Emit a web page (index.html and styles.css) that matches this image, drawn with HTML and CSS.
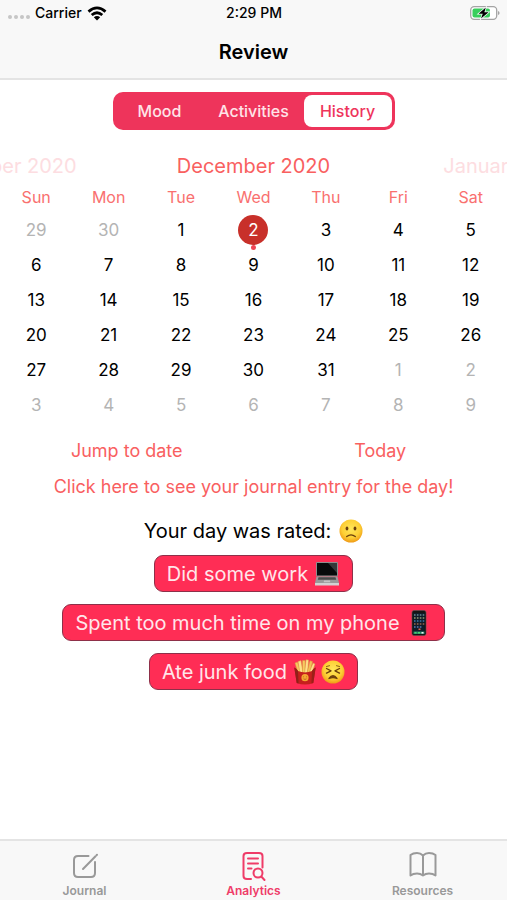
FILE: index.html
```html
<!DOCTYPE html>
<html lang="en">
<head>
    <meta charset="UTF-8" />
    <meta name="viewport" content="width=device-width, initial-scale=1.0" />
    <title>Review</title>
    <link rel="stylesheet" href="styles.css">
</head>
<body>
    <header class="top-bar">
        <div class="status">
            <div class="status-left">
                <span class="signal"><i></i><i></i><i></i><i></i></span>
                <span>Carrier</span>
                <svg class="wifi" viewBox="0 0 20 15" width="20" height="15">
                    <g fill="none" stroke="#000" stroke-width="2.800">
                        <path d="M1.500 5.600Q10-1.800 18.500 5.600" />
                        <path d="M4.700 9Q10 4.400 15.300 9" />
                    </g>
                    <path d="M6.800 11.200Q10 8.600 13.200 11.200L10 14.500z" />
                </svg>
            </div>
            <span>2:29 PM</span>
            <div class="status-right">
                <svg viewBox="0 0 30 14" width="30" height="14">
                    <rect x=".7" y=".7" width="26" height="12.600" rx="3.500" fill="#fff" stroke="#a4a4a4" stroke-width="1.300" />
                    <rect x="2.500" y="2.500" width="17.500" height="9" rx="2" fill="#38cf5c" />
                    <path d="M28 5v4q1.600-.6 1.600-2T28 5z" fill="#a4a4a4" />
                    <path d="M15.800 1.600L8.500 7.800h4.200L11 12.600l7.600-6.400h-4.200z" fill="#000" stroke="#fff" stroke-width="1.400" paint-order="stroke" />
                </svg>
            </div>
        </div>
        <h1>Review</h1>
    </header>

    <main>
        <div class="segments">
            <button type="button">Mood</button>
            <button type="button">Activities</button>
            <button type="button" class="selected">History</button>
        </div>

        <div class="months">
            <span class="faded">November 2020</span>
            <span>December 2020</span>
            <span class="faded">January 2021</span>
        </div>

        <table class="calendar">
            <thead>
                <tr><th>Sun</th><th>Mon</th><th>Tue</th><th>Wed</th><th>Thu</th><th>Fri</th><th>Sat</th></tr>
            </thead>
            <tbody>
                <tr><td class="other">29</td><td class="other">30</td><td>1</td><td><span class="today">2</span></td><td>3</td><td>4</td><td>5</td></tr>
                <tr><td>6</td><td>7</td><td>8</td><td>9</td><td>10</td><td>11</td><td>12</td></tr>
                <tr><td>13</td><td>14</td><td>15</td><td>16</td><td>17</td><td>18</td><td>19</td></tr>
                <tr><td>20</td><td>21</td><td>22</td><td>23</td><td>24</td><td>25</td><td>26</td></tr>
                <tr><td>27</td><td>28</td><td>29</td><td>30</td><td>31</td><td class="other">1</td><td class="other">2</td></tr>
                <tr><td class="other">3</td><td class="other">4</td><td class="other">5</td><td class="other">6</td><td class="other">7</td><td class="other">8</td><td class="other">9</td></tr>
            </tbody>
        </table>

        <div class="jump">
            <button type="button">Jump to date</button>
            <button type="button">Today</button>
        </div>
        <a class="entry" href="#entry">Click here to see your journal entry for the day!</a>

        <p class="rating">
            <span>Your day was rated:</span>
            <svg viewBox="0 0 24 24" width="24" height="24" role="img" aria-label="sad">
                <defs>
                    <radialGradient id="face" cx=".5" cy=".4" r=".6">
                        <stop offset="0" stop-color="#ffe75a" />
                        <stop offset=".65" stop-color="#fdcf35" />
                        <stop offset="1" stop-color="#ef9a16" />
                    </radialGradient>
                </defs>
                <circle cx="12" cy="12" r="11.500" fill="url(#face)" />
                <ellipse cx="8" cy="9.500" rx="1.400" ry="2" fill="#6b3f0c" />
                <ellipse cx="16" cy="9.500" rx="1.400" ry="2" fill="#6b3f0c" />
                <path d="M7.700 17.600q4.300-3.600 8.600 0" fill="none" stroke="#6b3f0c" stroke-width="1.300" stroke-linecap="round" />
            </svg>
        </p>

        <ul class="tags">
            <li>
                <span>Did some work</span>
                <!-- laptop -->
                <svg viewBox="0 0 26 26" width="26" height="26">
                    <rect x="2" y="1" width="22" height="14.500" rx="1" fill="#8d8d8d" />
                    <path d="M3 2h20v12.500H3z" fill="#080a0b" />
                    <path d="M14 2h9v10z" fill="#35393a" />
                    <path d="M2.500 15.500h21L25 22H1z" fill="#9a9a9a" />
                    <path d="M4.500 16.300h17l.7 2.500H3.800z" fill="#4b4b4b" />
                    <path d="M10 19.500h6l.3 1.700H9.700z" fill="#c4c4c4" />
                    <path d="M1 22h24v2.500H1z" fill="#d2d2d2" />
                </svg>
            </li>
            <li>
                <span>Spent too much time on my phone</span>
                <!-- phone -->
                <svg viewBox="0 0 26 26" width="26" height="26">
                    <rect x="6" y=".5" width="14" height="25" rx="2" fill="#151515" stroke="#56504f" stroke-width=".6" />
                    <path d="M7.500 3h11v19.500h-11z" fill="#101c29" />
                    <g fill="none" stroke-width="1.600" stroke-dasharray="1.600 1.300">
                        <path d="M8 5h10.500" stroke="#698a94" />
                        <path d="M8 8h10.500" stroke="#8d9b72" />
                        <path d="M8 11h10.500" stroke="#397ba9" />
                        <path d="M8 14h10.500" stroke="#9b654c" />
                        <path d="M8 17h8" stroke="#547bb4" />
                    </g>
                    <path d="M12.500 18.500h2v1.500h-2z" fill="#df634c" />
                    <path d="M7.500 21.500h11V24h-11z" fill="#26846b" />
                    <path d="M8.500 22h2v1.600h-2zm3.500 0h2v1.600h-2z" fill="#4ed46b" />
                    <path d="M15.500 22h2v1.600h-2z" fill="#eee" />
                </svg>
            </li>
            <li>
                <span>Ate junk food</span>
                <span class="pair">
                    <!-- fries -->
                    <svg viewBox="0 0 24 26" width="24" height="26">
                        <g stroke="#d99b3c" stroke-width=".5">
                            <path d="M2 4l2.500-1L8 14H5z" fill="#f5c860" />
                            <path d="M5 2.500L8 1.500 10 14H7z" fill="#ffe28a" />
                            <path d="M9.500 1.500h2.600V14H9.500z" fill="#f7cc62" />
                            <path d="M13 .7l2.600.3-1 13h-3z" fill="#ffe08a" />
                            <path d="M17 1.800l2.500.8L17 14h-3z" fill="#f3c157" />
                            <path d="M20 4l2 1-3 9h-3z" fill="#ffe08a" />
                        </g>
                        <path d="M1.300 8.500Q4 9.500 5 12q7 2.800 14 0 1-2.500 3.700-3.500L20.300 24Q12 27 3.700 24z" fill="#c5201d" />
                        <path d="M1.300 8.500Q4 9.500 5 12l.6 12.500L3.700 24z" fill="#8f2018" />
                        <path d="M22.700 8.500Q20 9.500 19 12l-.6 12.500 1.900-.5z" fill="#9c2018" />
                        <circle cx="12" cy="18.700" r="3.600" fill="#f4a632" />
                        <path d="M10.200 17.800h.8m2 0h.8m-3.300 2q1.500 1.300 3 0" fill="none" stroke="#b9571b" stroke-width=".8" />
                    </svg>
                    <!-- persevering face -->
                    <svg viewBox="0 0 24 24" width="24" height="24">
                        <circle cx="12" cy="12" r="11.500" fill="url(#face)" />
                        <g fill="none" stroke="#6b3f0c" stroke-width="1.300" stroke-linecap="round" stroke-linejoin="round">
                            <path d="M5.500 8.500l4.500 2.300-4.500 2.300M18.500 8.500L14 10.800l4.500 2.300" />
                            <path d="M5.500 6.500l3-.8M18.500 6.500l-3-.8" stroke-width=".8" />
                            <path d="M8 18.500q4-5.500 8 0-4-1.800-8 0z" fill="#8b4a10" />
                        </g>
                    </svg>
                </span>
            </li>
        </ul>
    </main>

    <nav class="tabs">
        <a href="#journal">
            <svg viewBox="0 0 30 30" width="30" height="30">
                <path d="M18.500 5H8Q4 5 4 9v13q0 4 4 4h13q4 0 4-4V11" />
                <path d="M13 18L25.500 5.200M26.500 4.200l.5-.5" stroke-width="2" />
            </svg>
            <span>Journal</span>
        </a>
        <a href="#analytics" class="active">
            <svg viewBox="0 0 30 30" width="30" height="30">
                <path d="M12 28H8q-3.500 0-3.500-3V5Q4.500 2 8 2h12q3.500 0 3.500 3v11.500" />
                <path d="M9 7.500h10M9 12.500h10M9 17.500h3.500" />
                <circle cx="19" cy="22" r="4.500" />
                <path d="M22.300 25.500L25.500 29" />
            </svg>
            <span>Analytics</span>
        </a>
        <a href="#resources">
            <svg viewBox="0 0 30 30" width="30" height="30">
                <path d="M15 4.500Q12.500 2 9 2 5 2 2.500 4v20.500Q5 22.500 9 22.500q3.500 0 6 2 2.500-2 6-2 4 0 6.500 2V4Q25 2 21 2q-3.500 0-6 2.500zm0 0v20" />
            </svg>
            <span>Resources</span>
        </a>
    </nav>
</body>
</html>
```
FILE: styles.css
```css
* {
    box-sizing: border-box;
}

body {
    margin: 0;
    min-height: 100vh;
    display: flex;
    flex-direction: column;
    background-color: #fff;
    color: #000;
    font-family: Inter, "Liberation Sans", sans-serif;
}

button {
    padding: 0;
    border: none;
    background: none;
    font-family: inherit;
    cursor: pointer;
}

a {
    text-decoration: none;
}

svg {
    flex-shrink: 0;
}

.top-bar {
    height: 80px;
    background-color: #f8f8f8;
    border-bottom: 2px solid #e4e4e4;
}

.status {
    display: grid;
    grid-template-columns: 1fr auto 1fr;
    align-items: center;
    height: 26px;
    padding: 0 7px 0 8px;
    font-size: 14px;
    font-weight: 500;
    line-height: 16px;
}

.status-left {
    display: flex;
    align-items: center;
    gap: 5px;
}

.status-right {
    display: flex;
    justify-content: flex-end;
}

.signal {
    display: flex;
    gap: 2px;
    padding-top: 8px;
}

.signal i {
    width: 4px;
    height: 4px;
    border-radius: 50%;
    background-color: #c6c6c6;
}

h1 {
    margin: 0;
    font-size: 20px;
    font-weight: 600;
    line-height: 52px;
    text-align: center;
}

main {
    flex: 1;
    display: flex;
    flex-direction: column;
    align-items: center;
    padding-top: 12px;
}

.segments {
    display: flex;
    height: 38px;
    padding: 3px;
    border-radius: 10px;
    background-color: #ee345b;
}

.segments button {
    width: 88px;
    border-radius: 8px;
    color: #ffe3e8;
    font-size: 16px;
    font-weight: 500;
}

.segments button:nth-child(2) {
    width: 100px;
}

.segments .selected {
    background-color: #fff;
    color: #ee345b;
}

/* the neighbouring months run off both edges */
.months {
    display: flex;
    justify-content: center;
    width: 100%;
    margin-top: 20px;
    overflow: hidden;
    color: #f9605f;
    font-size: 20px;
    line-height: 32px;
    white-space: nowrap;
}

.months span {
    flex: 0 0 50%;
    text-align: center;
}

.months .faded {
    color: #fddde1;
}

.calendar {
    width: 100%;
    table-layout: fixed;
    border-collapse: collapse;
    font-size: 17px;
    text-align: center;
}

.calendar th {
    height: 30px;
    padding: 0;
    color: #f9706f;
    font-size: 16px;
    font-weight: 400;
}

.calendar td {
    height: 35px;
    padding: 0;
}

.calendar .other {
    color: #b4b4b4;
}

.today {
    position: relative;
    display: inline-block;
    width: 30px;
    border-radius: 50%;
    background-color: #c8302a;
    color: #fff;
    line-height: 30px;
}

.today::after {
    content: "";
    position: absolute;
    left: 13px;
    bottom: -5px;
    width: 5px;
    height: 5px;
    border-radius: 50%;
    background-color: #ef4555;
}

.jump {
    display: flex;
    width: 100%;
    margin-top: 11px;
}

.jump button {
    flex: 1;
    color: #f9605f;
    font-size: 18px;
    line-height: 36px;
}

.entry {
    color: #f9605f;
    font-size: 18px;
    line-height: 36px;
}

.rating {
    display: flex;
    align-items: center;
    gap: 8px;
    margin: 9px 0 7px;
    font-size: 20px;
    line-height: 34px;
}

.tags {
    display: flex;
    flex-direction: column;
    align-items: center;
    gap: 12px;
    margin: 0;
    padding: 0;
    list-style: none;
}

.tags li {
    display: flex;
    align-items: center;
    gap: 6px;
    height: 37px;
    padding: 0 12px;
    border: 1px solid #8e3049;
    border-radius: 9px;
    background-color: #ff2d55;
    color: #ffe6ea;
    font-size: 20px;
}

.pair {
    display: flex;
    align-items: center;
    gap: 4px;
}

.tabs {
    display: flex;
    height: 61px;
    border-top: 2px solid #e4e4e4;
    background-color: #f8f8f8;
}

.tabs a {
    flex: 1;
    display: flex;
    flex-direction: column;
    align-items: center;
    gap: 2px;
    padding-top: 10px;
    color: #999;
    font-size: 12px;
    font-weight: 600;
    line-height: 16px;
}

.tabs svg {
    fill: none;
    stroke: currentColor;
    stroke-width: 2;
    stroke-linecap: round;
    stroke-linejoin: round;
}

.tabs .active {
    color: #ef3c68;
}
```
